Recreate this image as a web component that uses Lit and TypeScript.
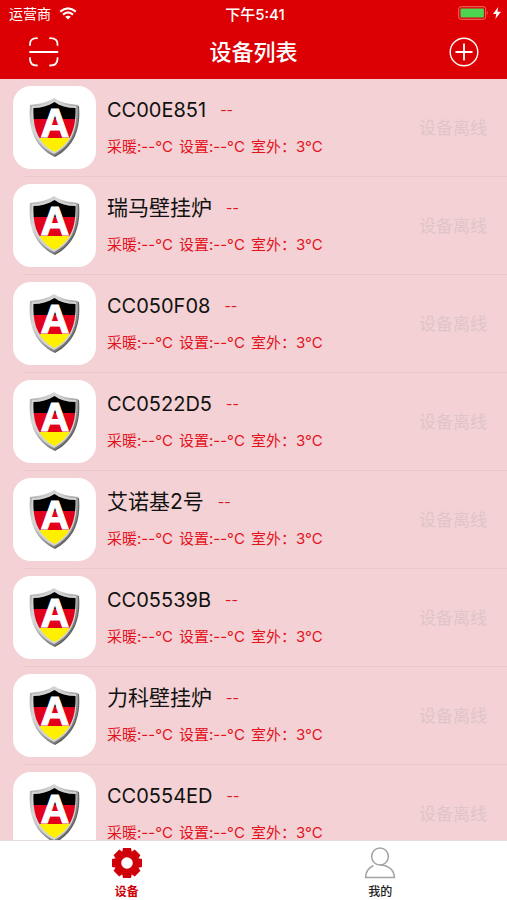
import { LitElement, html, css, svg } from "lit";
import { customElement, property, state } from "lit/decorators.js";
import { classMap } from "lit/directives/class-map.js";

@customElement("brand-shield")
class BrandShield extends LitElement {
  static styles = css`
    :host {
      display: grid;
      place-items: center;
      width: 83px;
      height: 83px;
      border-radius: 18px;
      background: #fff;
    }
    svg {
      display: block;
    }
    .letter {
      font: bold 40px "Liberation Sans", Arial, sans-serif;
      fill: #fff;
      stroke: #fff;
      stroke-width: 1;
    }
  `;

  render() {
    return html`
      <svg width="53" height="61" viewBox="0 0 53 61" aria-hidden="true">
        <defs>
          <linearGradient id="steel" x1="0" y1="0" x2="1" y2="1">
            <stop offset="0" stop-color="#a4a4a4" />
            <stop offset=".3" stop-color="#d8d8d8" />
            <stop offset=".6" stop-color="#9a9a9a" />
            <stop offset="1" stop-color="#555" />
          </linearGradient>
          <clipPath id="field">
            <path d="M26.500 5C20 9 13 11 5.500 11C4.500 31 10 46 26.500 55C43 46 48 31 47.500 11C39 11 32 9 26.500 5Z" />
          </clipPath>
        </defs>
        <path
          d="M27 2C21 6 13 8 3 9C1 32 7 50 27 60C46 50 53 32 51 9C41 8 33 6 27 2Z"
          fill="#5d5f60"
        />
        <path
          d="M26 1C20 5 12 7 2 8C0 32 6 49 26 59C45 49 52 32 50 8C40 7 32 5 26 1Z"
          fill="url(#steel)"
        />
        <path
          d="M26 3C20 7 13 9 4 9C2 32 8 48 26 57C44 48 50 32 48 9C39 9 32 7 26 3Z"
          fill="#d2d4d2"
        />
        <g clip-path="url(#field)">
          <rect width="53" height="22" fill="#000" />
          <rect y="22" width="53" height="19" fill="#e3001b" />
          <rect y="41" width="53" height="20" fill="#fff000" />
        </g>
        <text class="letter" x="27" y="40" text-anchor="middle">A</text>
      </svg>
    `;
  }
}

interface Device {
  name: string;
  mode: string;
  heating: string;
  target: string;
  outdoor: string;
  status: string;
}

@customElement("device-row")
class DeviceRow extends LitElement {
  @property({ attribute: false }) device!: Device;

  static styles = css`
    :host {
      display: flex;
      align-items: center;
      padding: 7px 20px 8px 13px;
      background: linear-gradient(#e9c8cb, #e9c8cb) 24px 100% / 100% 1px no-repeat;
    }
    .info {
      flex: 1;
      min-width: 0;
      margin-left: 11px;
      display: flex;
      flex-direction: column;
      gap: 15px;
      white-space: nowrap;
    }
    .title {
      display: flex;
      align-items: center;
      gap: 14px;
      height: 24px;
      font-size: 21px;
      line-height: 24px;
      color: #111;
    }
    .serial {
      font-size: 20px;
    }
    .mode {
      font-size: 14px;
      color: #e3131d;
    }
    .readings {
      display: flex;
      gap: 6px;
      height: 20px;
      font-size: 15px;
      line-height: 20px;
      color: #e3131d;
    }
    .status {
      font-size: 17px;
      line-height: 24px;
      color: #dfc5c7;
    }
  `;

  render() {
    const d = this.device;
    const serial = /^[0-9A-Z]+$/.test(d.name);
    return html`
      <brand-shield></brand-shield>
      <div class="info">
        <div class="title">
          <span class=${classMap({ serial })}>${d.name}</span><span class="mode">${d.mode}</span>
        </div>
        <div class="readings">
          <span>采暖:${d.heating}°C</span>
          <span>设置:${d.target}°C</span>
          <span>室外：${d.outdoor}°C</span>
        </div>
      </div>
      <span class="status">${d.status}</span>
    `;
  }
}

const NAMES = [
  "CC00E851",
  "瑞马壁挂炉",
  "CC050F08",
  "CC0522D5",
  "艾诺基2号",
  "CC05539B",
  "力科壁挂炉",
  "CC0554ED",
];

const gearTeeth = [0, 45, 90, 135, 180, 225, 270, 315].map(
  (a) => svg`<path d="M-5 -10L-4 -15H4L5 -10Z" transform="rotate(${a})"/>`
);

@customElement("app-root")
class AppRoot extends LitElement {
  @state() private tab = "devices";

  private devices: Device[] = NAMES.map((name) => ({
    name,
    mode: "--",
    heating: "--",
    target: "--",
    outdoor: "3",
    status: "设备离线",
  }));

  static styles = css`
    :host {
      display: flex;
      flex-direction: column;
      height: 100vh;
      background: #f3d1d4;
      font-family: Inter, "Noto Sans CJK SC", sans-serif;
    }
    header {
      background: #dc0005;
      color: #fff;
    }
    .bar {
      display: grid;
      grid-template-columns: 1fr auto 1fr;
      align-items: center;
      box-sizing: border-box;
    }
    .system {
      height: 26px;
      padding: 0 6px 0 9px;
      font-size: 15px;
      font-weight: 500;
    }
    .carrier {
      display: flex;
      align-items: center;
      gap: 8px;
      font-size: 14px;
      font-weight: 400;
    }
    .power {
      display: flex;
      align-items: center;
      justify-content: flex-end;
      gap: 4px;
    }
    .nav {
      height: 53px;
      padding: 0 28px 2px;
    }
    h1 {
      margin: 0;
      font-size: 22px;
      line-height: 32px;
      font-weight: 500;
    }
    button {
      padding: 0;
      border: 0;
      background: none;
      color: inherit;
      font-family: inherit;
      cursor: pointer;
    }
    svg {
      display: block;
    }
    .end {
      justify-self: end;
    }
    .start {
      justify-self: start;
    }
    main {
      flex: 1;
      min-height: 0;
      overflow: hidden;
    }
    ul {
      margin: 0;
      padding: 0;
      list-style: none;
    }
    .tabs {
      display: grid;
      grid-template-columns: 1fr 1fr;
      height: 60px;
      box-sizing: border-box;
      border-top: 1px solid #e4dcdc;
      background: #fff;
    }
    .tab {
      display: flex;
      flex-direction: column;
      align-items: center;
      gap: 5px;
      padding-top: 6px;
      font-size: 12px;
      line-height: 16px;
      font-weight: 500;
      color: #222;
    }
    .active {
      color: #d0000a;
      font-weight: 700;
    }
  `;

  render() {
    return html`
      <header>
        <div class="bar system">
          <div class="carrier">
            <span>运营商</span>
            <svg width="18" height="13" viewBox="0 0 18 13" aria-hidden="true">
              <g fill="none" stroke="#fff" stroke-width="2.1">
                <path d="M1.2 4.6Q9 -2 16.8 4.6" />
                <path d="M4 7.6Q9 3.2 14 7.6" />
              </g>
              <path d="M9 12.6L6.2 9.7Q9 7.6 11.8 9.7Z" fill="#fff" />
            </svg>
          </div>
          <span>下午5:41</span>
          <div class="power">
            <svg width="31" height="14" viewBox="0 0 31 14" aria-hidden="true">
              <rect x=".7" y=".7" width="27" height="12.6" rx="2.5" fill="none" stroke="#f0706b" />
              <rect x="2.5" y="2.5" width="23.4" height="9" rx="1" fill="#4cd550" />
              <path d="M29 5Q30.8 7 29 9Z" fill="#f0706b" />
            </svg>
            <svg width="8" height="12" viewBox="0 0 8 12" aria-hidden="true">
              <path d="M5.2 0L0 7H3.3L2.4 12L8 4.7H4.5Z" fill="#fff" />
            </svg>
          </div>
        </div>
        <div class="bar nav">
          <button class="start" aria-label="扫一扫">
            <svg width="31" height="30" viewBox="0 0 31 30" fill="none" stroke="#fff" stroke-linecap="round">
              <path
                stroke-width="1.8"
                d="M2 8V7Q2 1.2 9 1.2M22 1.2Q29.5 1.2 29.5 7V8M2 21V22Q2 28.5 9 28.5M22 28.5Q29.5 28.5 29.5 22V21"
              />
              <path stroke-width="1.8" d="M2 15H29.5" />
            </svg>
          </button>
          <h1>设备列表</h1>
          <button class="end" aria-label="添加设备">
            <svg width="30" height="30" viewBox="0 0 30 30" fill="none" stroke="#fff">
              <circle cx="15" cy="15" r="13.8" stroke-width="1.4" />
              <path stroke-width="1.8" d="M6.5 15H23.5M15 6.5V23.5" />
            </svg>
          </button>
        </div>
      </header>

      <main>
        <ul>
          ${this.devices.map((d) => html`<li><device-row .device=${d}></device-row></li>`)}
        </ul>
      </main>

      <nav class="tabs">
        <button
          class=${classMap({ tab: true, active: this.tab === "devices" })}
          @click=${() => (this.tab = "devices")}
        >
          <svg width="32" height="32" viewBox="-16 -16 32 32" aria-hidden="true">
            <g fill="#d0000a">${gearTeeth}</g>
            <circle r="8.8" fill="none" stroke="#d0000a" stroke-width="6" />
          </svg>
          <span>设备</span>
        </button>
        <button
          class=${classMap({ tab: true, active: this.tab === "mine" })}
          @click=${() => (this.tab = "mine")}
        >
          <svg
            width="32"
            height="32"
            viewBox="0 0 32 32"
            fill="none"
            stroke="#a3a3a3"
            stroke-width="1.5"
            aria-hidden="true"
          >
            <circle cx="16" cy="9.5" r="8.4" />
            <path d="M9.4 18.5Q2 22 1.5 30.5H30.5Q29.5 18.5 16 17.9" />
          </svg>
          <span>我的</span>
        </button>
      </nav>
    `;
  }
}
